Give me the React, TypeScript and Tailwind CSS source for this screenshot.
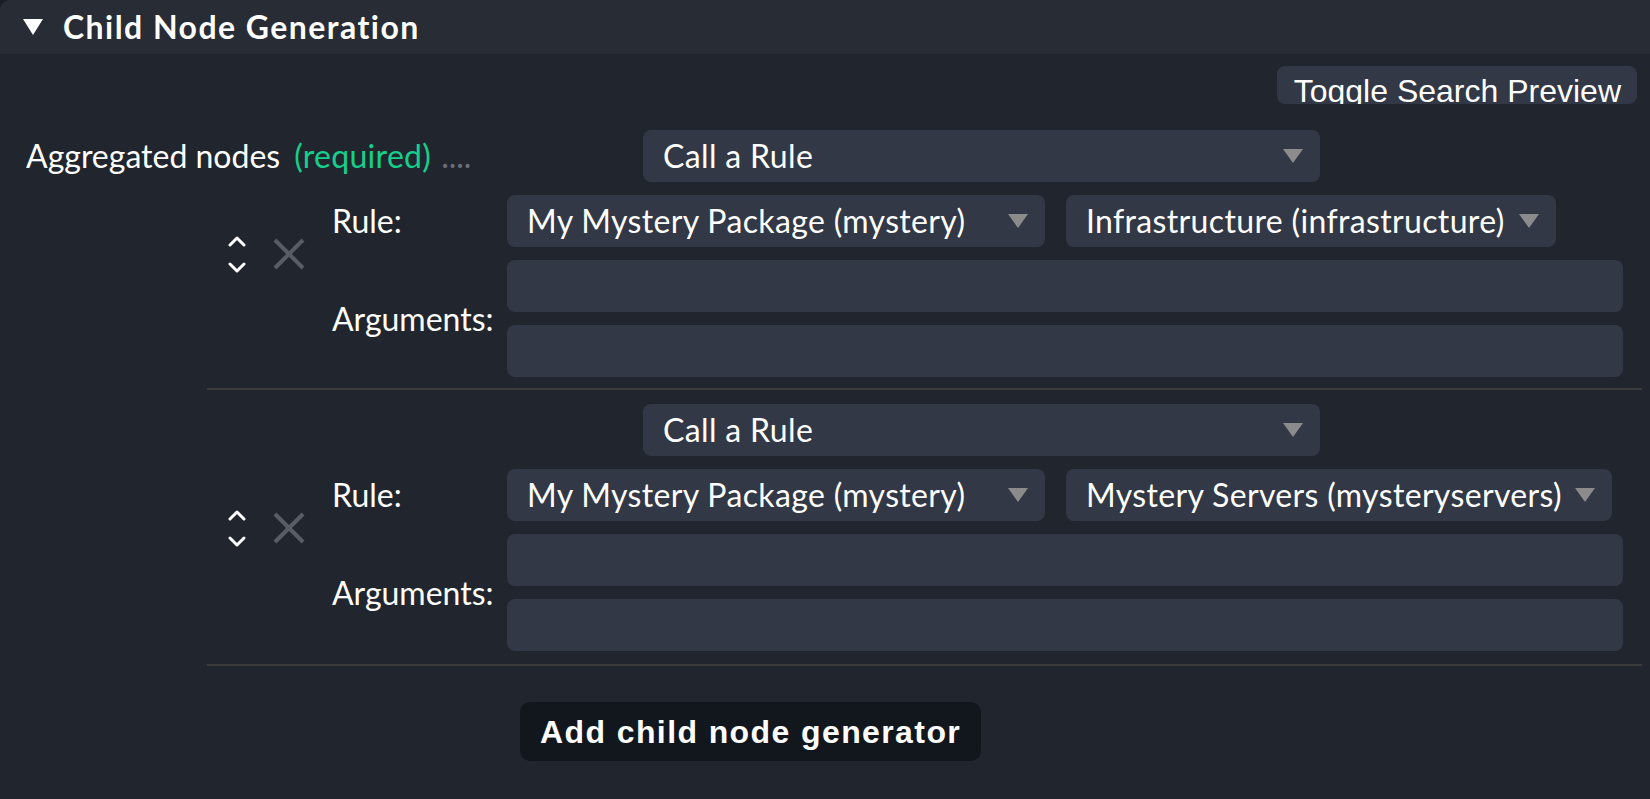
import React from "react";

function DropTriangle() {
  return (
    <svg width="20" height="14" viewBox="0 0 20 14" className="shrink-0">
      <polygon points="0,0 20,0 10,14" fill="#8b8b8b" />
    </svg>
  );
}

function Select({ text, width }: { text: string; width: string }) {
  return (
    <div className={`${width} h-[52px] rounded-[8px] bg-[#323845] flex items-center pl-[20px] pr-[17px] shrink-0`}>
      <span className="flex-1 whitespace-nowrap text-[32px] tracking-[0.35px] leading-none">{text}</span>
      <DropTriangle />
    </div>
  );
}

function Controls() {
  return (
    <div className="flex items-start pt-[40px] pl-[21px] w-[125px] shrink-0">
      <svg width="18" height="40" viewBox="0 0 18 40">
        <polyline points="2,10 9,3 16,10" fill="none" stroke="#ffffff" strokeWidth="3" strokeLinecap="round" strokeLinejoin="round" />
        <polyline points="2,29 9,36 16,29" fill="none" stroke="#ffffff" strokeWidth="3" strokeLinecap="round" strokeLinejoin="round" />
      </svg>
      <svg width="32" height="32" viewBox="0 0 32 32" className="ml-[27px] mt-[3px]">
        <line x1="2" y1="2" x2="30" y2="30" stroke="#585d65" strokeWidth="4" />
        <line x1="30" y1="2" x2="2" y2="30" stroke="#585d65" strokeWidth="4" />
      </svg>
    </div>
  );
}

function Entry({ second, rule }: { second: string; rule: string }) {
  return (
    <div className="flex">
      <Controls />
      <div className="flex flex-col gap-[13px] w-[175px] shrink-0">
        <div className="h-[52px] flex items-center text-[32px]">Rule:</div>
        <div className="h-[117px] flex items-center text-[32px]">Arguments:</div>
      </div>
      <div className="flex flex-col gap-[13px] w-[1116px]">
        <div className="flex gap-[21px]">
          <Select text="My Mystery Package (mystery)" width="w-[538px]" />
          <Select text={rule} width={second} />
        </div>
        <div className="h-[52px] rounded-[8px] bg-[#323845]" />
        <div className="h-[52px] rounded-[8px] bg-[#323845]" />
      </div>
    </div>
  );
}

export default function App() {
  return (
    <div className="w-[1650px] h-[799px] bg-[#1a1e24] overflow-hidden font-['Lato','Noto_Sans',sans-serif] text-white">
      <div className="h-full rounded-tl-[10px] bg-[#21262e] overflow-hidden">
        <div className="h-[54px] bg-[#272c35] flex items-center pl-[23px]">
          <svg width="20" height="16" viewBox="0 0 20 16">
            <polygon points="0,0 20,0 10,16" fill="#ffffff" />
          </svg>
          <span className="ml-[20px] text-[32px] font-bold tracking-[1.45px] leading-none">Child Node Generation</span>
        </div>

        <div className="flex justify-end pt-[12px] pr-[13px]">
          <div className="h-[38px] overflow-hidden rounded-[8px] bg-[#323845] pl-[17px] pr-[16px] pt-[1px] font-['Liberation_Sans',Arial,sans-serif] text-[32px] leading-normal whitespace-nowrap">
            Toggle Search Preview
          </div>
        </div>

        <div className="flex mt-[26px]">
          <div className="w-[617px] ml-[26px] h-[52px] flex items-center">
            <div className="w-[444px] overflow-hidden whitespace-nowrap text-[32px]">
              <span>Aggregated nodes</span>
              <span className="ml-[14px] tracking-[0.3px] text-[#15cf8c]">(required)</span>
              <span className="ml-[10px] text-[#6b7078]">.....</span>
            </div>
          </div>
          <Select text="Call a Rule" width="w-[677px]" />
        </div>

        <div className="ml-[207px] w-[1435px] mt-[13px]">
          <Entry second="w-[490px]" rule="Infrastructure (infrastructure)" />
          <div className="mt-[11px] h-[2px] bg-[#3b3b3d]" />
          <div className="pt-[14px] pl-[436px]">
            <Select text="Call a Rule" width="w-[677px]" />
          </div>
          <div className="mt-[13px]">
            <Entry second="w-[546px]" rule="Mystery Servers (mysteryservers)" />
          </div>
          <div className="mt-[13px] h-[2px] bg-[#3b3b3d]" />
          <div className="pl-[313px] pt-[36px]">
            <div className="inline-flex h-[59px] items-center rounded-[10px] bg-[#12171e] px-[20px] font-['Liberation_Sans',Arial,sans-serif] text-[32px] font-bold tracking-[1.4px] whitespace-nowrap">
              Add child node generator
            </div>
          </div>
        </div>
      </div>
    </div>
  );
}
